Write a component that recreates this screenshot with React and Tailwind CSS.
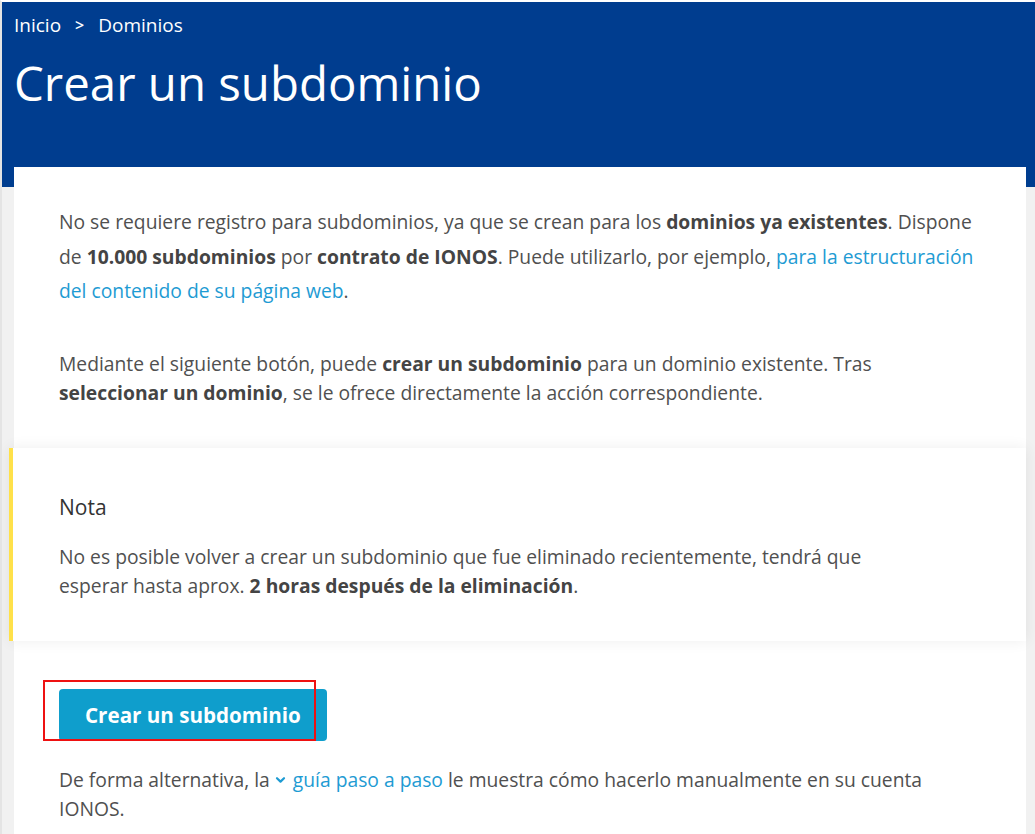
const font = { fontFamily: '"Open Sans", "Noto Sans", sans-serif' };

function Chevron() {
    return (
        <svg width="11" height="10" viewBox="0 0 11 10" className="inline-block mr-[7px] -mt-[2px]">
            <path d="M2 3.2 L5.5 6.6 L9 3.2" fill="none" stroke="#1e9bd3" strokeWidth="2.2" strokeLinecap="round" strokeLinejoin="round" />
        </svg>
    );
}

export default function App() {
    return (
        <div
            className="w-[1035px] h-[834px] overflow-hidden bg-[#f1f1f1] border-l-2 border-t-2 border-l-[#e4e4e4] border-t-white"
            style={font}
        >
            <div className="bg-[#003d8f] h-[185px] pl-[12px] text-white">
                <div className="flex items-center h-[46px] text-[19px]">
                    <span>Inicio</span>
                    <span className="mx-[14px] text-[16px] font-semibold">&gt;</span>
                    <span>Dominios</span>
                </div>
                <h1 className="text-[47.4px] leading-[60px] mt-[5px]">Crear un subdominio</h1>
            </div>

            <div className="relative -mt-[20px] ml-[12px] mr-[9px] bg-white pb-[60px]">
                <div className="px-[45px] pt-[38px] text-[19.3px] text-[#505050]">
                    <p className="leading-[34.5px]">
                        No se requiere registro para subdominios, ya que se crean para los{' '}
                        <strong className="text-[#444]">dominios ya existentes</strong>. Dispone de{' '}
                        <strong className="text-[#444]">10.000 subdominios</strong> por{' '}
                        <strong className="text-[#444]">contrato de IONOS</strong>. Puede utilizarlo, por ejemplo,{' '}
                        <a className="text-[#1e9bd3]">para la estructuración del contenido de su página web</a>.
                    </p>
                    <p className="leading-[29px] mt-[40px] max-w-[880px]">
                        Mediante el siguiente botón, puede <strong className="text-[#444]">crear un subdominio</strong> para un dominio existente. Tras<br />
                        <strong className="text-[#444]">seleccionar un dominio</strong>, se le ofrece directamente la acción correspondiente.
                    </p>
                </div>

                <div className="-ml-[5px] mt-[41px] bg-white border-l-4 border-[#ffe14a] shadow-[0_0_14px_rgba(0,0,0,0.07)] pl-[46px] pr-[40px] pt-[45px] pb-[41px]">
                    <h3 className="text-[21px] text-[#333] leading-[28px]">Nota</h3>
                    <p className="mt-[21px] text-[19.3px] leading-[29px] text-[#505050]">
                        No es posible volver a crear un subdominio que fue eliminado recientemente, tendrá que<br />
                        esperar hasta aprox. <strong className="text-[#444]">2 horas después de la eliminación</strong>.
                    </p>
                </div>

                <div className="px-[45px] mt-[48px]">
                    <div className="relative inline-block">
                        <button className="h-[52px] px-[26px] rounded-[4px] bg-[#0f9ecc] text-white text-[20.6px] font-bold leading-[52px]">
                            Crear un subdominio
                        </button>
                        <div className="absolute left-[-16px] top-[-9px] w-[273px] h-[61px] border-2 border-[#ee1111]" />
                    </div>
                    <p className="mt-[24px] text-[19.3px] leading-[29px] text-[#505050]">
                        De forma alternativa, la <Chevron />
                        <a className="text-[#1e9bd3]">guía paso a paso</a> le muestra cómo hacerlo manualmente en su cuenta IONOS.
                    </p>
                </div>
            </div>
        </div>
    );
}
